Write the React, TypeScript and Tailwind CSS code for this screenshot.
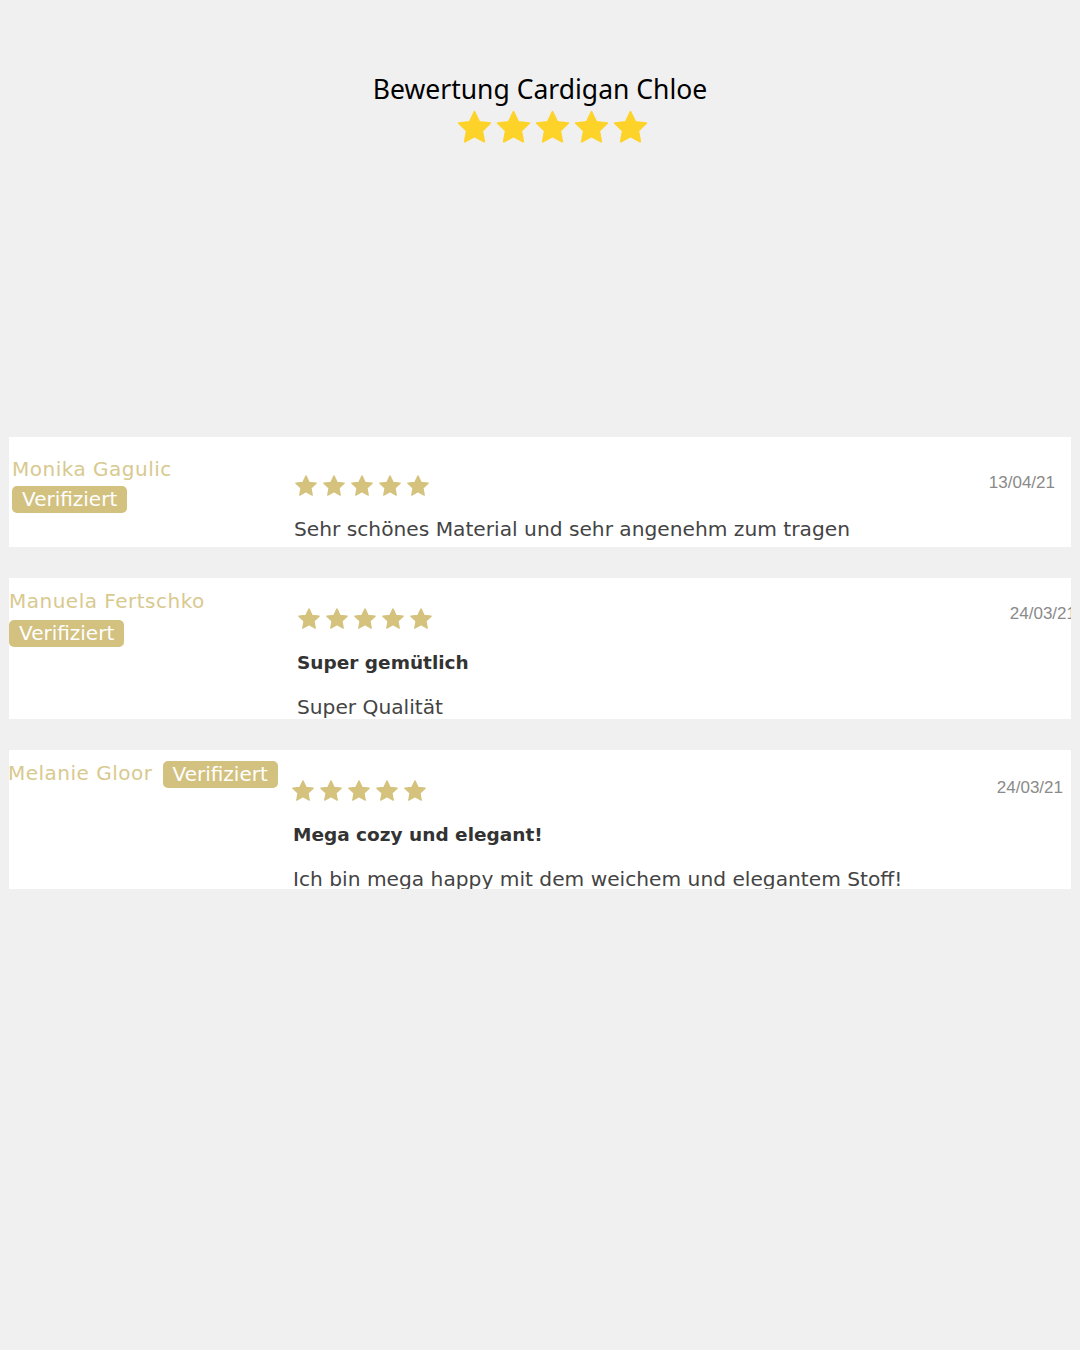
import React from "react";

const STAR =
  "M12 1.8l3.1 6.5 7.1.9-5.2 4.9 1.3 7.1L12 17.8l-6.3 3.4 1.3-7.1L1.8 9.2l7.1-.9z";

function Stars({ size, gap, color }: { size: number; gap: number; color: string }) {
  return (
    <div className="flex" style={{ gap }}>
      {[0, 1, 2, 3, 4].map((i) => (
        <svg key={i} width={size} height={size} viewBox="0 0 24 24">
          <path d={STAR} fill={color} stroke={color} strokeWidth="1.2" strokeLinejoin="round" />
        </svg>
      ))}
    </div>
  );
}

function Badge() {
  return (
    <span className="inline-block rounded-[5px] bg-[#d3c17f] px-[10px] h-[27px] leading-[27px] text-[20px] text-white font-['DejaVu_Sans',sans-serif]">
      Verifiziert
    </span>
  );
}

const body = "font-['DejaVu_Sans',sans-serif] text-[20.2px] leading-[24px] text-[#444]";
const title = "font-['DejaVu_Sans',sans-serif] text-[18.5px] leading-[24px] font-bold text-[#333]";
const nameCls =
  "font-['DejaVu_Sans',sans-serif] text-[20px] leading-[24px] tracking-[0.5px] text-[#d8c98f]";
const dateCls = "font-['Liberation_Sans',sans-serif] text-[17px] leading-[20px] text-[#8a8a8a]";
const gold = "#d4c27d";

export default function App() {
  return (
    <div className="min-h-[1350px] w-[1080px] bg-[#f0f0f0] overflow-hidden">
      <div className="flex flex-col items-center pt-[70px]">
        <h1 className="font-['Noto_Sans',sans-serif] text-[26.5px] leading-[38px] text-black">
          Bewertung Cardigan Chloe
        </h1>
        <div className="mt-[1px] ml-[24px]">
          <Stars size={37} gap={2} color="#fdd32a" />
        </div>
      </div>

      <div className="mt-[291px] ml-[9px] w-[1062px] flex flex-col gap-[31px]">
        {/* card 1 */}
        <div className="bg-white h-[110px] flex overflow-hidden">
          <div className="w-[285px] shrink-0 pl-[3px] pt-[20px]">
            <div className={nameCls}>Monika Gagulic</div>
            <div className="mt-[5px]">
              <Badge />
            </div>
          </div>
          <div className="flex-1 pt-[37px]">
            <Stars size={24} gap={4} color={gold} />
            <p className={`${body} mt-[19px] whitespace-nowrap`}>
              Sehr schönes Material und sehr angenehm zum tragen
            </p>
          </div>
          <div className={`${dateCls} pt-[36px] pr-[16px]`}>13/04/21</div>
        </div>

        {/* card 2 */}
        <div className="bg-white h-[141px] flex overflow-hidden">
          <div className="w-[288px] shrink-0 pl-0 pt-[11px]">
            <div className={nameCls}>Manuela Fertschko</div>
            <div className="mt-[7px]">
              <Badge />
            </div>
          </div>
          <div className="flex-1 pt-[29px]">
            <Stars size={24} gap={4} color={gold} />
            <p className={`${title} mt-[20px]`}>Super gemütlich</p>
            <p className={`${body} mt-[20px]`}>Super Qualität</p>
          </div>
          <div className={`${dateCls} pt-[26px] mr-[-5px] shrink-0`}>24/03/21</div>
        </div>

        {/* card 3 */}
        <div className="bg-white h-[139px] flex overflow-hidden">
          <div className="w-[283px] shrink-0 pt-[11px] flex items-start gap-[10px] ml-[-1px]">
            <span className={`${nameCls} whitespace-nowrap`}>Melanie Gloor</span>
            <Badge />
          </div>
          <div className="flex-1 pt-[29px]">
            <Stars size={24} gap={4} color={gold} />
            <p className={`${title} mt-[20px] ml-[2px]`}>Mega cozy und elegant!</p>
            <p className={`${body} mt-[20px] ml-[2px] whitespace-nowrap`}>
              Ich bin mega happy mit dem weichem und elegantem Stoff!
            </p>
          </div>
          <div className={`${dateCls} pt-[28px] pr-[8px]`}>24/03/21</div>
        </div>
      </div>
    </div>
  );
}
